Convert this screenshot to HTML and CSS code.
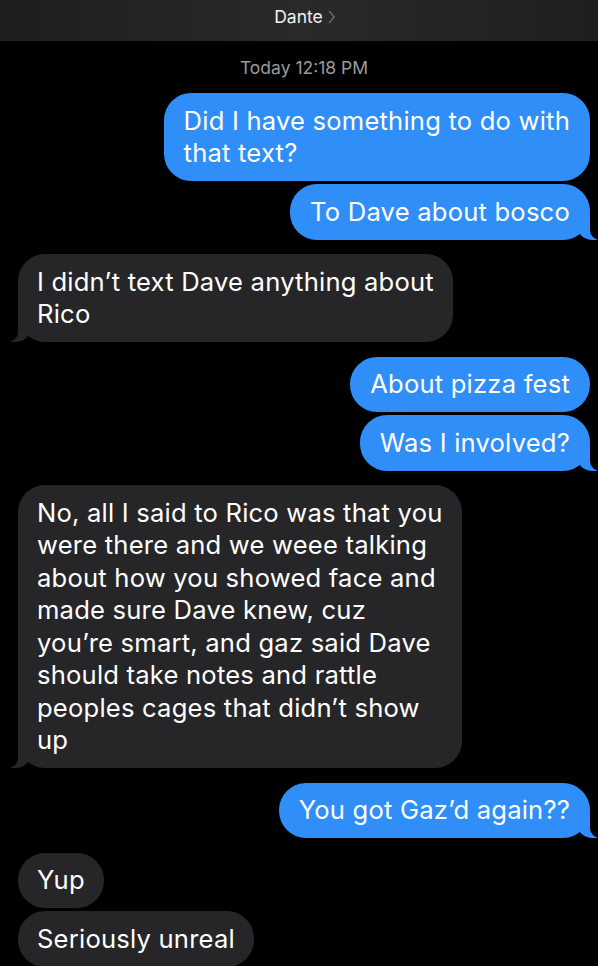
FILE: index.html
```html
<!DOCTYPE html>
<html lang="en">
<head>
	<meta charset="UTF-8">
	<title>Dante</title>
	<link rel="stylesheet" href="styles.css">
</head>
<body>
	<!-- 顶部联系人 -->
	<div class="top">
		<span class="name">Dante</span>
		<svg class="chev" width="8" height="14" viewBox="0 0 8 14"><path d="M1.5 1.5 L6.2 7 L1.5 12.5" fill="none" stroke="#6b6b6e" stroke-width="1.4" stroke-linecap="round" stroke-linejoin="round"/></svg>
	</div>

	<!-- 消息列表 -->
	<div class="thread">
		<div class="stamp">Today 12:18 PM</div>

		<div class="msg sent">Did I have something to do with<br>that text?</div>
		<div class="msg sent tail">To Dave about bosco</div>

		<div class="msg recv tail gap">I didn’t text Dave anything about<br>Rico</div>

		<div class="msg sent gap">About pizza fest</div>
		<div class="msg sent tail">Was I involved?</div>

		<div class="msg recv tail gap">No, all I said to Rico was that you<br>were there and we weee talking<br>about how you showed face and<br>made sure Dave knew, cuz<br>you’re smart, and gaz said Dave<br>should take notes and rattle<br>peoples cages that didn’t show<br>up</div>

		<div class="msg sent tail gap">You got Gaz’d again??</div>

		<div class="msg recv gap">Yup</div>
		<div class="msg recv">Seriously unreal</div>
	</div>
</body>
</html>
```

FILE: styles.css
```css
/* 初始化 */
html,body{margin:0;padding:0;background:#000;}
body{font-family:Inter,'Noto Sans',sans-serif;color:#fff;overflow:hidden;}

/* 顶部 */
.top{
	height: 41px;
	display: flex;
	align-items: center;
	justify-content: center;
	gap: 5px;
	padding-bottom: 8px;
	box-sizing: border-box;
	background: linear-gradient(90deg,#1e1e1f,#2a2a2b 50%,#1f1f20);
}

.top .name{
	font-size: 17.5px;
	color: #f2f2f2;
	padding-left: 12px;
}

.top .chev{
	margin-top: 1px;
}

/* 消息 */
.thread{
	display: flex;
	flex-direction: column;
	align-items: flex-start;
	padding: 0 8px 40px 18px;
	overflow: hidden;
}

.stamp{
	align-self: center;
	font-size: 17.5px;
	line-height: 20px;
	color: #9a9a9e;
	padding: 17px 0 15px;
}

.msg{
	position: relative;
	font-size: 25.6px;
	letter-spacing: 0.2px;
	line-height: 32.5px;
	padding: 11.5px 20px;
	border-radius: 27px;
	white-space: nowrap;
	margin-top: 3px;
}

.stamp + .msg{
	margin-top: 0;
}

.msg.gap{
	margin-top: 14.5px;
}

.sent{
	align-self: flex-end;
	background: #2f8ef8;
}

.recv{
	background: #262628;
	padding: 11.5px 19px;
}

/* 气泡尾巴 */
.tail::before,
.tail::after{
	content: "";
	position: absolute;
	bottom: 0;
	height: 25px;
}

.sent.tail::before{
	right: -7px;
	width: 20px;
	background: #2f8ef8;
	border-bottom-left-radius: 16px 14px;
}

.sent.tail::after{
	right: -26px;
	width: 26px;
	background: #000;
	border-bottom-left-radius: 10px;
}

.recv.tail::before{
	left: -7px;
	width: 20px;
	background: #262628;
	border-bottom-right-radius: 16px 14px;
}

.recv.tail::after{
	left: -26px;
	width: 26px;
	background: #000;
	border-bottom-right-radius: 10px;
}
```
